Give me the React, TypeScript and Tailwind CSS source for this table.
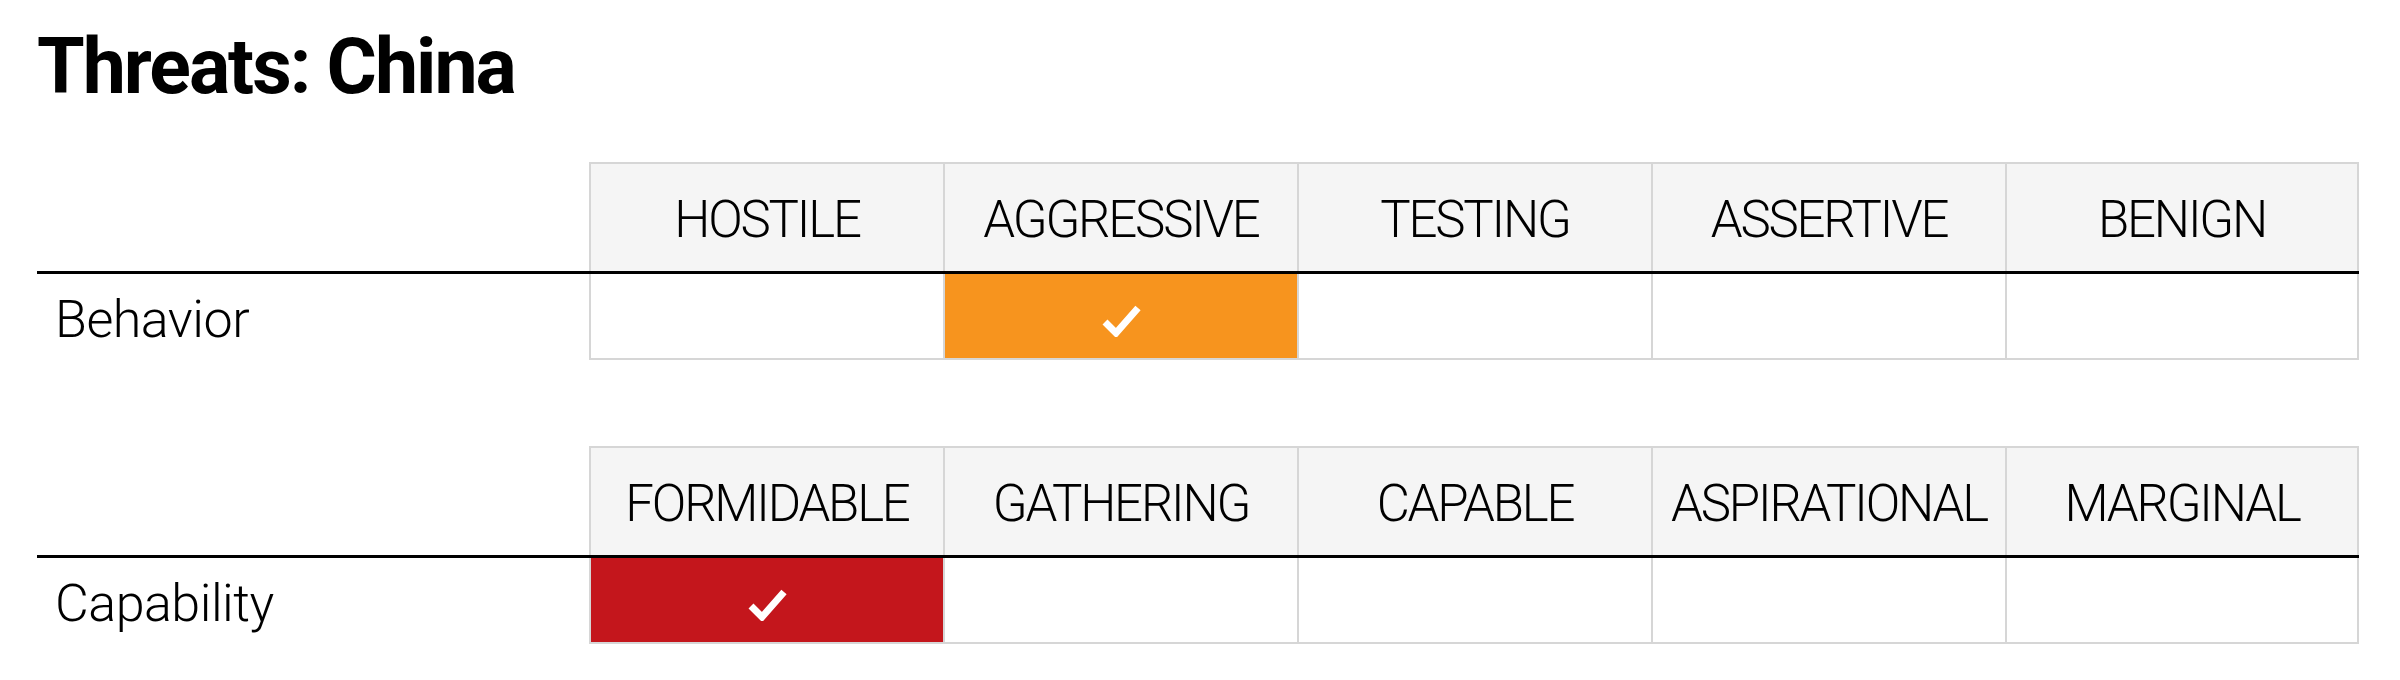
import clsx from 'clsx'

const behaviorLevels = ['HOSTILE', 'AGGRESSIVE', 'TESTING', 'ASSERTIVE', 'BENIGN']
const capabilityLevels = ['FORMIDABLE', 'GATHERING', 'CAPABLE', 'ASPIRATIONAL', 'MARGINAL']

function Check() {
  return (
    <svg width="40" height="34" viewBox="0 0 40 34">
      <path d="M4 19 L15 30 L37 5" fill="none" stroke="white" strokeWidth="7" strokeLinejoin="miter" />
    </svg>
  )
}

interface ThreatTableProps {
  label: string
  levels: string[]
  selected: number
  color: 'orange' | 'red'
}

function ThreatTable({ label, levels, selected, color }: ThreatTableProps) {
  return (
    <div className="flex w-[2322px] flex-col">
      {/* 헤더 행 */}
      <div className="flex">
        <div className="w-[552px]" />
        <div className="grid h-[109px] w-[1770px] grid-cols-5 border-t-2 border-[#d6d6d6] bg-[#f5f5f5]">
          {levels.map((level, i) => (
            <div
              key={level}
              className={clsx(
                'flex items-center justify-center border-l-2 border-[#d6d6d6] pt-[6px] text-[51px] font-light tracking-[-2.2px]',
                i === levels.length - 1 && 'border-r-2'
              )}
            >
              {level}
            </div>
          ))}
        </div>
      </div>
      <div className="h-[3px] bg-black" />
      {/* 값 행 */}
      <div className="flex h-[86px]">
        <div className="flex w-[552px] items-center pl-[18px] pt-[6px] text-[52px] font-light tracking-[-0.5px]">
          {label}
        </div>
        <div className="grid w-[1770px] grid-cols-5">
          {levels.map((level, i) => (
            <div
              key={level}
              className={clsx(
                'flex items-center justify-center border-b-2 border-l-2 border-[#d6d6d6] pt-[8px]',
                i === levels.length - 1 && 'border-r-2',
                i === selected && color === 'orange' && 'bg-[#f7941e]',
                i === selected && color === 'red' && 'bg-[#c4161c]'
              )}
            >
              {i === selected && <Check />}
            </div>
          ))}
        </div>
      </div>
    </div>
  )
}

export default function App() {
  return (
    <div className="min-h-[680px] w-[2400px] bg-white pl-[37px] pt-[29px] text-black font-['Roboto',sans-serif]">
      <h1 className="text-[77px] font-bold leading-none tracking-[-2px]">Threats: China</h1>
      <div className="mt-[56px]">
        <ThreatTable label="Behavior" levels={behaviorLevels} selected={1} color="orange" />
      </div>
      <div className="mt-[86px]">
        <ThreatTable label="Capability" levels={capabilityLevels} selected={0} color="red" />
      </div>
    </div>
  )
}
